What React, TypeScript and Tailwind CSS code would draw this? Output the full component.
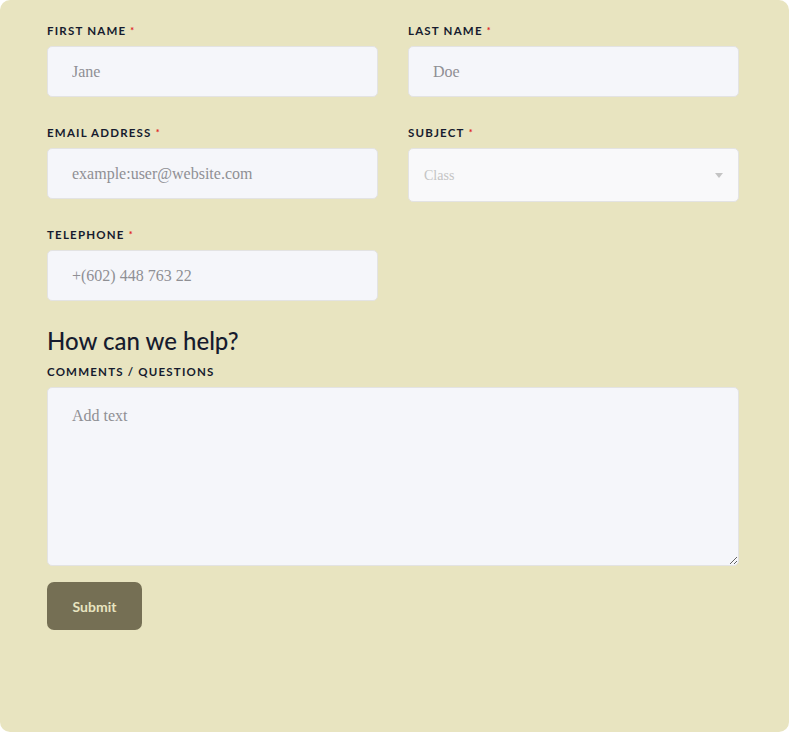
import React from "react";

const labelCls =
  "block text-[11.5px] font-bold tracking-[1.2px] uppercase text-[#161b2e] leading-[18px] mb-[6px] [font-family:Lato,'Open_Sans',sans-serif]";
const inputCls =
  "w-full h-[51px] rounded-[5px] border border-[#e3e3e3] bg-[#f5f6fa] pl-[24px] text-[16px] text-[#333] placeholder:text-[#8f8f94] outline-none [font-family:'Liberation_Serif','DejaVu_Serif',serif]";

function Label({ text, req = true }: { text: string; req?: boolean }) {
  return (
    <label className={labelCls}>
      {text}
      {req && <span className="text-[#e02020] ml-[4px] text-[9px] align-top">*</span>}
    </label>
  );
}

export default function App() {
  return (
    <div className="bg-white w-[789px] h-[740px]">
      <div className="bg-[#e8e4c0] w-[789px] h-[732px] rounded-[10px] pl-[47px] pr-[50px] pt-[22px]">
        <div className="grid grid-cols-[331px_331px] gap-x-[30px]">
          <div className="mb-[27px]">
            <Label text="First Name" />
            <input className={inputCls} placeholder="Jane" />
          </div>
          <div className="mb-[27px]">
            <Label text="Last Name" />
            <input className={inputCls} placeholder="Doe" />
          </div>
          <div className="mb-[24px]">
            <Label text="Email Address" />
            <input className={inputCls} placeholder="example:user@website.com" />
          </div>
          <div className="mb-[24px]">
            <Label text="Subject" />
            <div className="relative w-full h-[54px] rounded-[5px] border border-[#e3e3e3] bg-[#f9f9fa] flex items-center pl-[15px] text-[14px] text-[#c4c4c4] [font-family:'Liberation_Serif','DejaVu_Serif',serif]">
              Class
              <span className="absolute right-[15px] top-[24px] w-0 h-0 border-l-[4px] border-r-[4px] border-t-[5px] border-l-transparent border-r-transparent border-t-[#c4c4c4]" />
            </div>
          </div>
          <div>
            <Label text="Telephone" />
            <input className={inputCls} placeholder="+(602) 448 763 22" />
          </div>
        </div>
        <h2 className="mt-[25px] text-[24px] leading-[30px] font-medium text-[#161b2e] [font-family:Lato,'Open_Sans',sans-serif]">
          How can we help?
        </h2>
        <label className={labelCls + " mt-[7px] mb-[4px]"}>Comments / Questions</label>
        <textarea
          className="block w-full h-[179px] rounded-[5px] border border-[#e3e3e3] bg-[#f5f6fa] pl-[24px] pt-[16px] text-[16px] placeholder:text-[#8f8f94] outline-none [font-family:'Liberation_Serif','DejaVu_Serif',serif]"
          placeholder="Add text"
        />
        <button className="mt-[16px] w-[95px] h-[48px] rounded-[7px] bg-[#756f54] text-[#e8e4c0] text-[14px] font-bold [font-family:Lato,'Open_Sans',sans-serif]">
          Submit
        </button>
      </div>
    </div>
  );
}
